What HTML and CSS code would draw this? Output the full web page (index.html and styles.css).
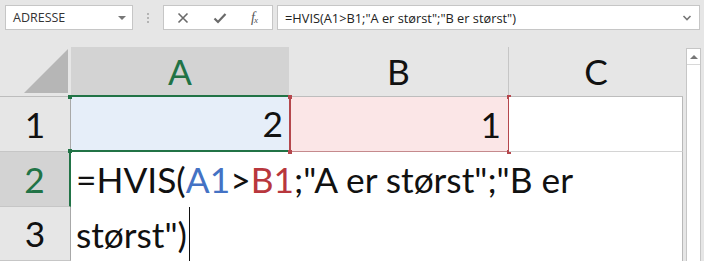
FILE: index.html
```html
<!DOCTYPE html>
<html lang="no">
<head>
    <meta charset="UTF-8">
    <title>HVIS-formel</title>
    <link rel="stylesheet" href="styles.css">
</head>
<body>
    <div class="formula-bar">
        <div class="name-box">
            <span>ADRESSE</span>
            <span class="drop"></span>
        </div>
        <div class="grip"><i></i><i></i><i></i></div>
        <div class="fx-box">
            <svg width="12" height="12" viewBox="0 0 12 12"><path d="M1.5 1.5 L10.5 10.5 M10.5 1.5 L1.5 10.5" stroke="#6a6a6a" stroke-width="1.6"/></svg>
            <svg width="14" height="12" viewBox="0 0 14 12"><path d="M1.5 6.5 L5 10 L12.5 2" stroke="#6a6a6a" stroke-width="2.2" fill="none"/></svg>
            <span class="fx"><i>f</i><sub>x</sub></span>
        </div>
        <div class="formula-input">
            <span>=HVIS(A1&gt;B1;"A er størst";"B er størst")</span>
            <svg width="10" height="8" viewBox="0 0 10 8"><path d="M1.5 2 L5 5.5 L8.5 2" stroke="#777" stroke-width="1.6" fill="none"/></svg>
        </div>
    </div>

    <div class="sheet">
        <div class="grid">
            <div class="corner">
                <svg width="44" height="44" viewBox="0 0 44 44"><path d="M44 0 L44 44 L0 44 Z" fill="#b6b6b6"/></svg>
            </div>
            <div class="col-head active">A</div>
            <div class="col-head sep">B</div>
            <div class="col-head">C</div>

            <div class="row-head">1</div>
            <div class="cell ref-a">2<span class="handle green tl"></span><span class="handle green bl"></span></div>
            <div class="cell ref-b">1<span class="handle red tl"></span><span class="handle red tr"></span><span class="handle red bl"></span><span class="handle red br"></span></div>
            <div class="cell plain"></div>

            <div class="row-head active">2</div>
            <div class="edit-cell">=HVIS(<span class="blue">A1</span>&gt;<span class="red">B1</span>;"A er størst";"B er<br>størst")<span class="caret"></span></div>

            <div class="row-head">3</div>
        </div>
        <div class="scrollbar">
            <div class="scroll-up"><span></span></div>
        </div>
    </div>
</body>
</html>
```

FILE: styles.css
```css
body {
    margin: 0;
    width: 704px;
    height: 261px;
    overflow: hidden;
    background-color: #e6e6e6;
    font-family: "Open Sans", "Noto Sans", sans-serif;
}

/* formelfelt */
.formula-bar {
    display: flex;
    align-items: center;
    height: 47px;
    padding: 0 4px 0 5px;
    box-sizing: border-box;
}

.name-box,
.fx-box,
.formula-input {
    height: 25px;
    margin-top: -12px;
    background-color: white;
    border: 1px solid #c6c6c6;
    box-sizing: border-box;
    display: flex;
    align-items: center;
}

.name-box {
    width: 128px;
    padding: 0 6px 0 7px;
    justify-content: space-between;
    font-size: 12.5px;
    color: #333;
}

.drop {
    width: 0;
    height: 0;
    border-left: 4px solid transparent;
    border-right: 4px solid transparent;
    border-top: 4px solid #777;
}

.grip {
    width: 30px;
    margin-top: -12px;
    display: flex;
    flex-direction: column;
    align-items: center;
    gap: 2px;
}

.grip i {
    width: 2px;
    height: 2px;
    background-color: #b4b4b4;
}

.fx-box {
    width: 110px;
    padding: 0 14px 0 13px;
    justify-content: space-between;
}

.fx {
    font-family: "Liberation Serif", serif;
    font-size: 14px;
    color: #555;
}

.fx sub {
    font-size: 9px;
    font-style: italic;
    margin-left: -1px;
    vertical-align: -1px;
}

.formula-input {
    margin-left: 4px;
    flex: 1;
    padding: 0 7px 0 7px;
    justify-content: space-between;
    font-size: 12.8px;
    color: #222;
}

/* regneark */
.sheet {
    display: flex;
}

.grid {
    display: grid;
    grid-template-columns: 71px 218px 220px 174px;
    grid-template-rows: 50px 55px 55px 54px;
    width: 683px;
    font-family: Lato, "Liberation Sans", sans-serif;
    font-size: 35.3px;
}

.corner {
    display: flex;
    justify-content: flex-end;
    align-items: flex-end;
    padding: 0 3px 3px 0;
    border-bottom: 1px solid #bdbdbd;
    box-sizing: border-box;
}

.col-head {
    display: flex;
    justify-content: center;
    align-items: center;
    background-color: #e6e6e6;
    border-bottom: 1px solid #bdbdbd;
    box-sizing: border-box;
    color: #111;
}

.col-head.sep {
    border-right: 1px solid #c6c6c6;
}

.col-head.active {
    background-color: #d3d3d3;
    color: #217346;
    border-bottom: 2px solid #217346;
}

.row-head {
    display: flex;
    justify-content: center;
    align-items: center;
    border-right: 1px solid #a8a8a8;
    border-bottom: 1px solid #c6c6c6;
    box-sizing: border-box;
    color: #111;
}

.row-head.active {
    background-color: #d3d3d3;
    color: #217346;
    border-right: 2px solid #217346;
}

.cell {
    position: relative;
    display: flex;
    justify-content: flex-end;
    align-items: center;
    box-sizing: border-box;
    background-color: white;
    color: #111;
}

.ref-a {
    background-color: #e6eef9;
    border-bottom: 2px solid #217346;
    padding-right: 6px;
}

.ref-b {
    background-color: #fbe6e7;
    border-left: 2px solid #b5474d;
    border-right: 1px solid #b5474d;
    border-bottom: 1px solid #c58a8d;
    padding-right: 7px;
}

.plain {
    border-right: 1px solid #b8b8b8;
    border-bottom: 1px solid #d4d4d4;
}

.handle {
    position: absolute;
    width: 4px;
    height: 4px;
}

.handle.green { background-color: #217346; }
.handle.red { background-color: #b5474d; }
.handle.tl { left: -3px; top: -2px; }
.handle.tr { right: -3px; top: -2px; }
.handle.bl { left: -3px; bottom: -3px; }
.handle.br { right: -3px; bottom: -3px; }

.edit-cell {
    grid-column: 2 / 5;
    grid-row: 3 / 5;
    background-color: white;
    border-right: 1px solid #b8b8b8;
    padding-left: 5px;
    line-height: 55px;
    color: #111;
    white-space: nowrap;
}

.blue { color: #4472c4; }
.red { color: #b8373d; }

.caret {
    display: inline-block;
    width: 1px;
    height: 54px;
    margin-left: 2px;
    vertical-align: top;
    background-color: #111;
}

.scrollbar {
    width: 15px;
    margin-left: 3px;
    background-color: white;
    border-left: 1px solid #c6c6c6;
    border-right: 1px solid #c6c6c6;
    box-sizing: border-box;
    margin-top: 1px;
}

.scroll-up {
    height: 15px;
    border-top: 1px solid #c6c6c6;
    border-bottom: 1px solid #d8d8d8;
    display: flex;
    justify-content: center;
    align-items: center;
}

.scroll-up span {
    width: 0;
    height: 0;
    border-left: 4px solid transparent;
    border-right: 4px solid transparent;
    border-bottom: 4px solid #777;
}
```
